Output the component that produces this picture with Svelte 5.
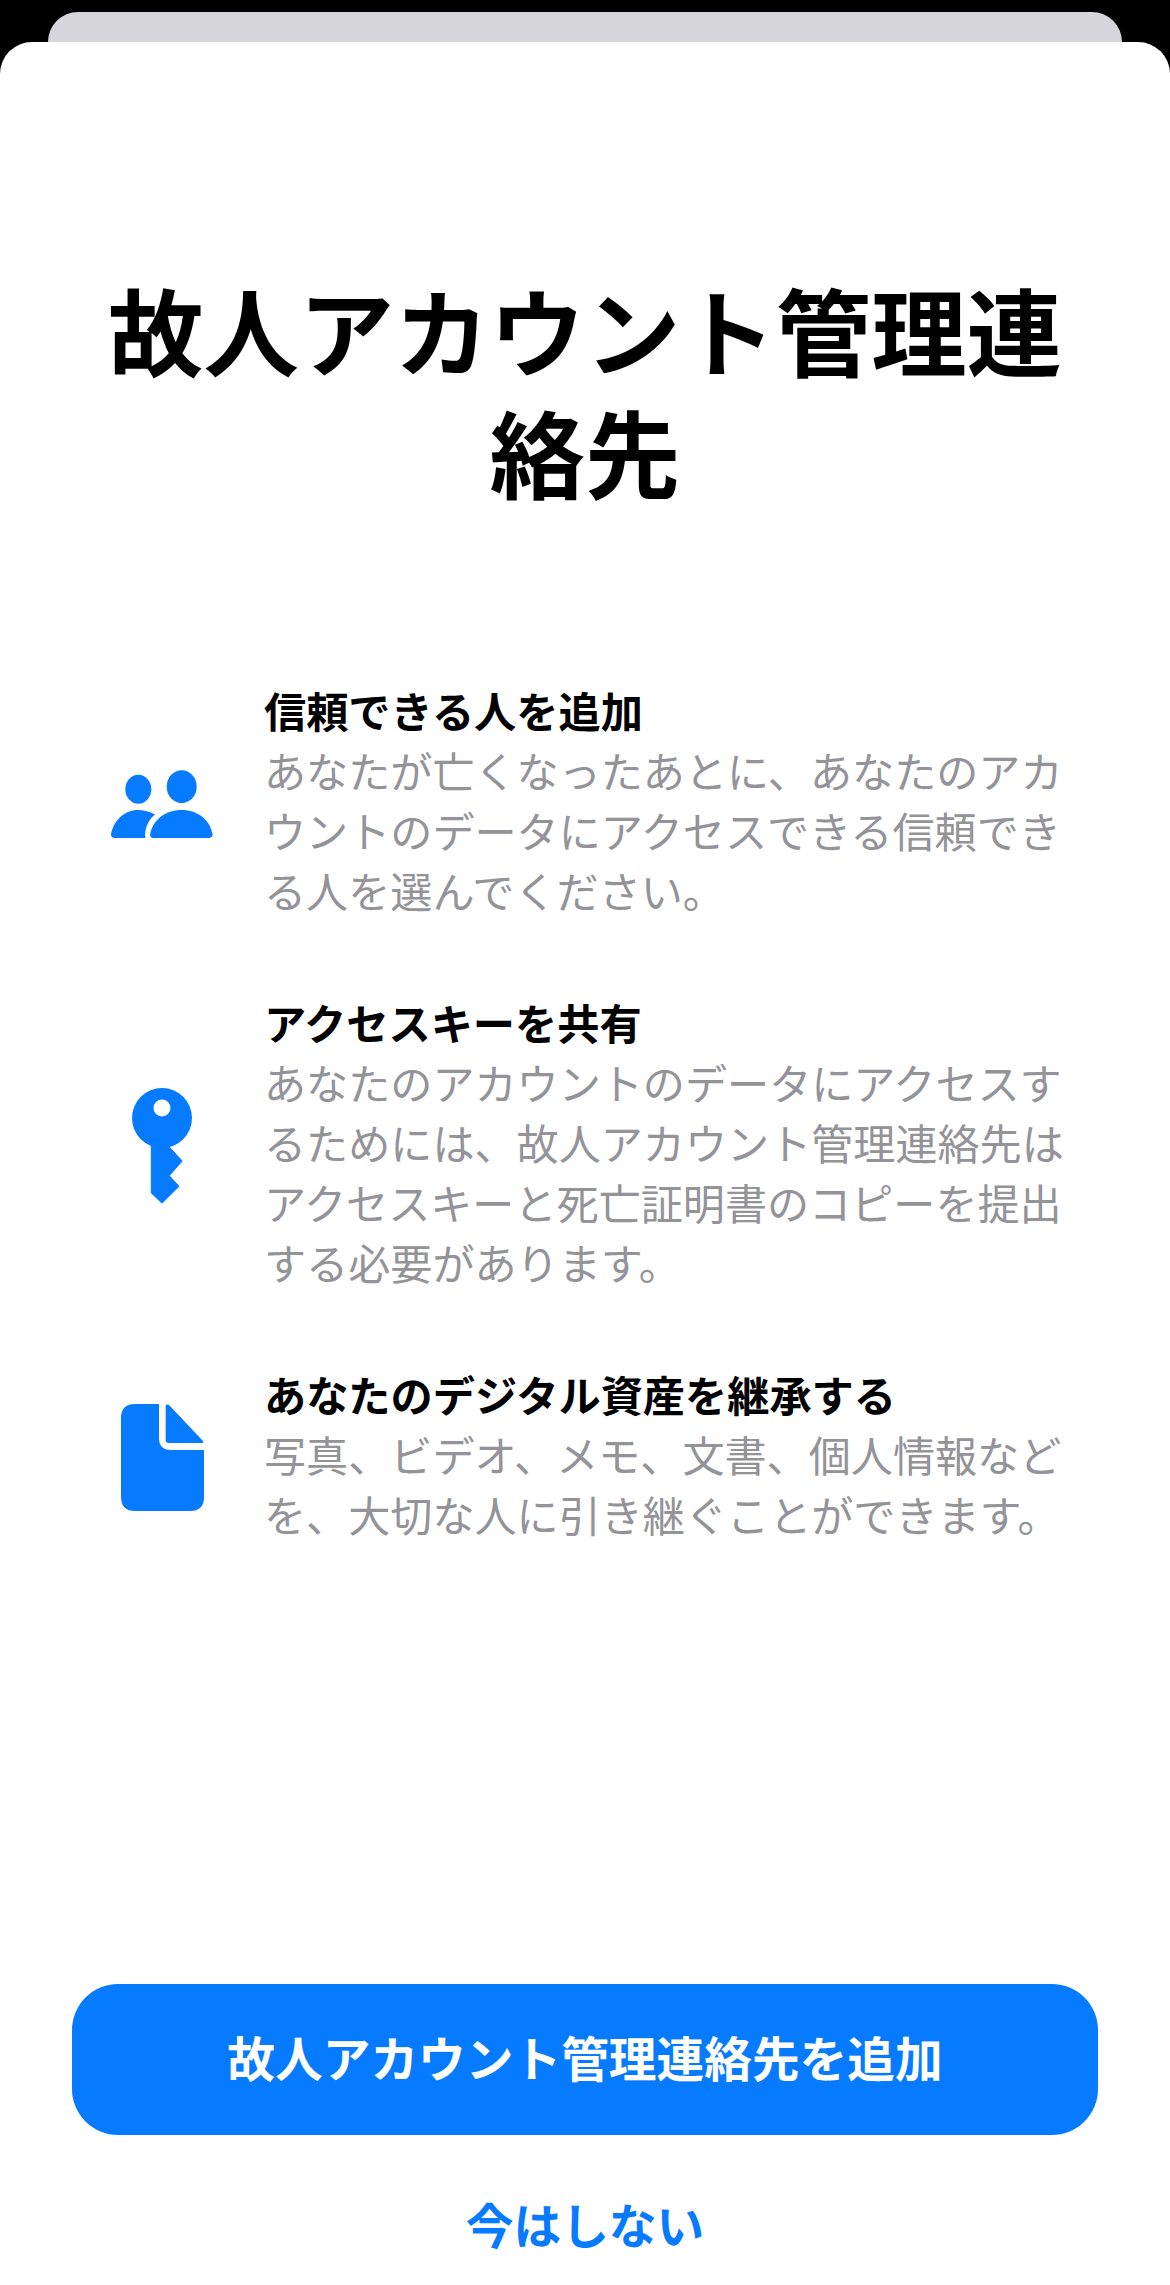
<script>
  const features = [
    {
      icon: 'people',
      title: '信頼できる人を追加',
      text: 'あなたが亡くなったあとに、あなたのアカウントのデータにアクセスできる信頼できる人を選んでください。'
    },
    {
      icon: 'key',
      title: 'アクセスキーを共有',
      text: 'あなたのアカウントのデータにアクセスするためには、故人アカウント管理連絡先はアクセスキーと死亡証明書のコピーを提出する必要があります。'
    },
    {
      icon: 'doc',
      title: 'あなたのデジタル資産を継承する',
      text: '写真、ビデオ、メモ、文書、個人情報などを、大切な人に引き継ぐことができます。'
    }
  ];
</script>

<div class="screen">
  <div class="back-sheet"></div>
  <main class="sheet">
    <h1>故人アカウント管理連絡先</h1>

    <ul class="features">
      {#each features as f}
        <li class="feature">
          <div class="icon">
            {#if f.icon === 'people'}
              <svg width="104" height="68" viewBox="0 0 104 68">
                <ellipse cx="28.3" cy="19.3" rx="13" ry="14.5" />
                <ellipse cx="71.7" cy="16.7" rx="15" ry="16.5" />
                <path d="M4.5 68H35.5C34 60 38 50 45 44.5C39.5 41.5 34 40 28 40C14.5 40 4 50 1 64a3.5 3.5 0 0 0 3.5 4z" />
                <path d="M43 68H99a3.5 3.5 0 0 0 3.6-4C100 50 88 40 71.5 40C55 40 43 50 40.2 64a3.5 3.5 0 0 0 2.8 4z" />
              </svg>
            {:else if f.icon === 'key'}
              <svg width="104" height="116" viewBox="0 0 104 116">
                <circle cx="52" cy="30" r="30" />
                <path class="rounded" d="M41.3 52V105L52 115.2L69 98.3L59.3 87.7L72.2 73L59.3 59V52z" />
                <circle class="hole" cx="52" cy="20" r="8.5" />
              </svg>
            {:else}
              <svg width="104" height="108" viewBox="0 0 104 108">
                <path d="M25 0H49V34Q49 46 61 46H94V93Q94 107 80 107H25Q11 107 11 93V14Q11 0 25 0z" />
                <path d="M55.7 1.5Q57 -0.5 59.5 1.5L93 37Q94 39 92 39H58.5Q55.7 39 55.7 36z" />
              </svg>
            {/if}
          </div>
          <div class="copy">
            <h2>{f.title}</h2>
            <p>{f.text}</p>
          </div>
        </li>
      {/each}
    </ul>

    <div class="actions">
      <button class="primary">故人アカウント管理連絡先を追加</button>
      <button class="link">今はしない</button>
    </div>
  </main>
</div>

<style>
  :global(body) {
    background: #000;
  }

  .screen {
    height: 2285px;
    display: flex;
    flex-direction: column;
    overflow: hidden;
    font-family: "Noto Sans CJK JP", "Noto Sans", sans-serif;
  }

  .back-sheet {
    height: 30px;
    margin: 12px 48px 0;
    background: #d5d5da;
    border-radius: 30px 30px 0 0;
    flex-shrink: 0;
  }

  .sheet {
    flex: 1;
    background: #fff;
    border-radius: 32px 32px 0 0;
    padding: 225px 72px 31px;
    display: flex;
    flex-direction: column;
    box-sizing: border-box;
  }

  h1 {
    margin: 0 auto;
    width: 970px;
    font-size: 95.4px;
    line-height: 122px;
    font-weight: 700;
    color: #000;
    text-align: center;
  }

  .features {
    list-style: none;
    margin: 169px 20px 0 38px;
    padding: 0;
    display: flex;
    flex-direction: column;
    gap: 72px;
  }

  .feature {
    display: flex;
    align-items: center;
    gap: 50px;
  }

  .icon {
    width: 104px;
    padding-top: 8px;
    flex-shrink: 0;
    display: flex;
    justify-content: center;
  }

  svg {
    display: block;
    fill: #077bff;
  }

  .rounded {
    stroke: #077bff;
    stroke-width: 1;
    stroke-linejoin: round;
  }

  .hole {
    fill: #fff;
  }

  .copy {
    flex: 1;
    min-width: 0;
  }

  h2 {
    margin: 0;
    font-size: 42.2px;
    line-height: 60px;
    font-weight: 700;
    color: #000;
  }

  p {
    margin: 0;
    font-size: 42.1px;
    line-height: 60px;
    font-weight: 400;
    color: #939398;
  }

  .actions {
    margin-top: auto;
    display: flex;
    flex-direction: column;
    align-items: stretch;
    gap: 59px;
  }

  button {
    border: none;
    padding: 0 0 6px;
    font-family: inherit;
    font-weight: 700;
    font-size: 47.7px;
    background: none;
  }

  .primary {
    height: 151px;
    background: #077bff;
    color: #fff;
    border-radius: 46px;
  }

  .link {
    height: 60px;
    line-height: 60px;
    color: #077bff;
  }
</style>
